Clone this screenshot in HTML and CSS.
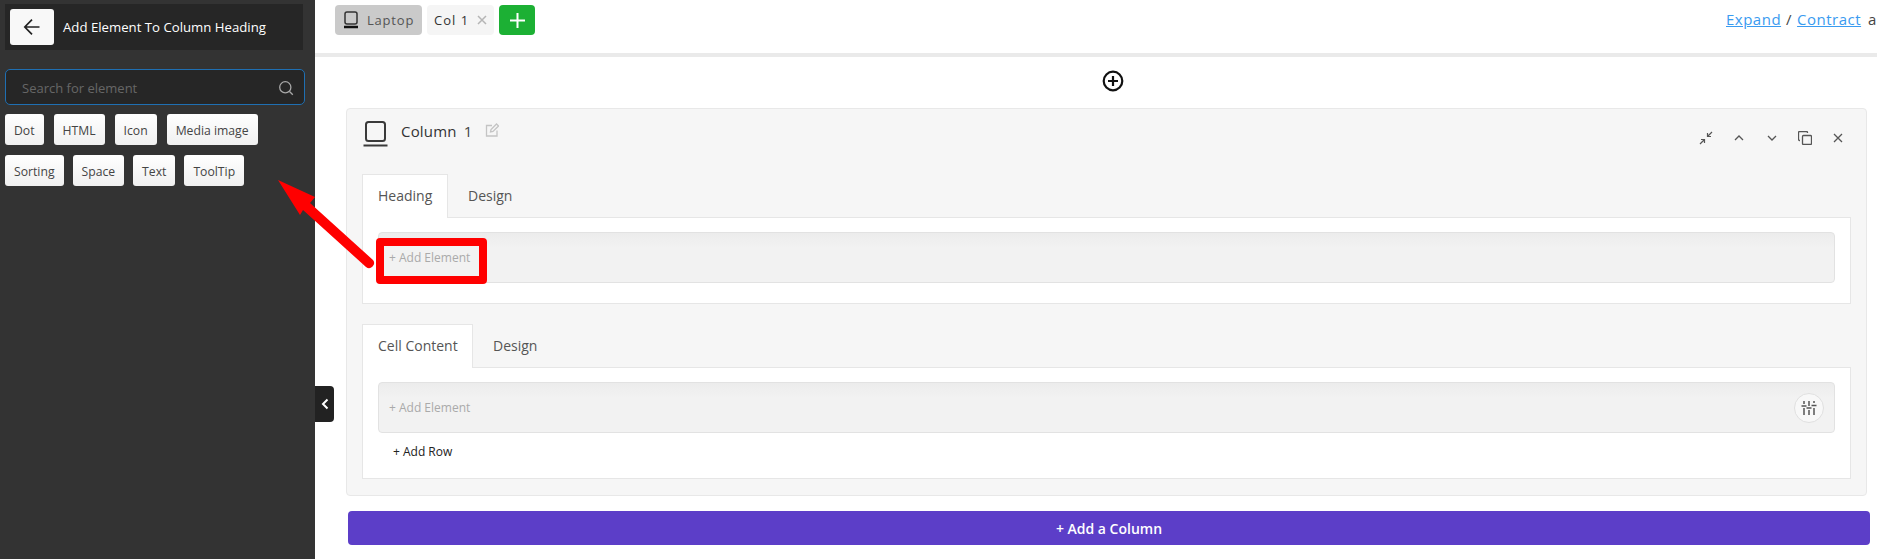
FILE: index.html
```html
<!DOCTYPE html>
<html lang="en">
<head>
<meta charset="utf-8">
<title>Column Editor</title>
<link rel="stylesheet" href="styles.css">
</head>
<body>
<div class="app">
  <aside class="sidebar">
    <div class="side-head">
      <button class="back" aria-label="Back">
        <svg width="18" height="18" viewBox="0 0 18 18" fill="none" stroke="#222" stroke-width="1.700"><path d="M16.500 9H1.800M9 1.600 1.800 9 9 16.400"/></svg>
      </button>
      <span class="side-title">Add Element To Column Heading</span>
    </div>
    <div class="search">
      <span class="search-text">Search for element</span>
      <svg width="16" height="16" viewBox="0 0 16 16" fill="none" stroke="#a8a8a8" stroke-width="1.300"><circle cx="7.300" cy="7.300" r="5.600"/><path d="m11.500 11.500 3.300 3.300"/></svg>
    </div>
    <div class="chips">
      <span class="chip">Dot</span>
      <span class="chip">HTML</span>
      <span class="chip">Icon</span>
      <span class="chip">Media image</span>
    </div>
    <div class="chips chips-second">
      <span class="chip">Sorting</span>
      <span class="chip">Space</span>
      <span class="chip">Text</span>
      <span class="chip">ToolTip</span>
    </div>
    <div class="toggle">
      <svg width="8" height="12" viewBox="0 0 8 12" fill="none" stroke="#fff" stroke-width="2"><path d="M6.500 1.500 2 6l4.500 4.500"/></svg>
    </div>
  </aside>

  <main class="main">
    <header class="topbar">
      <div class="tabs-top">
        <span class="device">
          <svg width="16" height="18" viewBox="0 0 16 18" fill="none" stroke="#333" stroke-width="1.500"><rect x="2" y="1" width="12" height="12" rx="2"/><path d="M1 16h14" stroke-width="2.500" stroke="#111"/></svg>
          Laptop
        </span>
        <span class="col-tab">Col 1 <svg class="col-x" width="10" height="10" viewBox="0 0 10 10" stroke="#b5b5b5" stroke-width="1.500"><path d="m1 1 8 8M9 1 1 9"/></svg></span>
        <span class="add-col">
          <svg width="15" height="15" viewBox="0 0 15 15" stroke="#fff" stroke-width="2"><path d="M7.500 0v15M0 7.500h15"/></svg>
        </span>
      </div>
      <div class="expand"><a href="#">Expand</a> / <a href="#">Contract</a> <span class="expand-all">all</span></div>
    </header>

    <div class="plus-row">
      <svg width="22" height="22" viewBox="0 0 22 22" fill="none" stroke="#111" stroke-width="2.200"><circle cx="11" cy="11" r="9.300"/><path d="M11 6v10M6 11h10"/></svg>
    </div>

    <section class="panel">
      <div class="panel-head">
        <svg class="panel-laptop" width="25" height="27" viewBox="0 0 25 27" fill="none" stroke="#3a3a3a" stroke-width="2"><rect x="3" y="2" width="19" height="19" rx="2.500"/><path d="M0.500 25.500h24"/></svg>
        <span class="panel-title">Column</span><span class="panel-num">1</span>
        <svg class="panel-edit" width="14" height="14" viewBox="0 0 14 14" fill="none" stroke="#c4c4c4" stroke-width="1.300"><path d="M7 2.500H1.500v10.500h10.500V7.500M5.500 9l.5-2.500L11.500 1l2 2L8 8.500z"/></svg>
        <div class="panel-actions">
          <svg width="14" height="14" viewBox="0 0 14 14" fill="none" stroke="#555" stroke-width="1.200"><path d="M13 1 8.500 5.500M8.500 2v3.500H12M1 13l4.500-4.500M2 8.500h3.500V12"/></svg>
          <svg width="14" height="14" viewBox="0 0 14 14" fill="none" stroke="#555" stroke-width="1.300"><path d="m3 9 4-4 4 4"/></svg>
          <svg width="14" height="14" viewBox="0 0 14 14" fill="none" stroke="#555" stroke-width="1.300"><path d="m3 5 4 4 4-4"/></svg>
          <svg width="14" height="14" viewBox="0 0 14 14" fill="none" stroke="#555" stroke-width="1.300"><rect x="4.500" y="4.500" width="9" height="9" rx="1"/><path d="M9.500 2V1.500a1 1 0 0 0-1-1h-7a1 1 0 0 0-1 1v7a1 1 0 0 0 1 1H2"/></svg>
          <svg width="14" height="14" viewBox="0 0 14 14" fill="none" stroke="#555" stroke-width="1.300"><path d="m3 3 8 8M11 3l-8 8"/></svg>
        </div>
      </div>

      <div class="tabs">
        <span class="tab tab-active tab-heading">Heading</span>
        <span class="tab">Design</span>
      </div>
      <div class="tab-body tab-body-heading">
        <div class="drop"><span class="drop-text">+ Add Element</span></div>
      </div>

      <div class="tabs tabs-second">
        <span class="tab tab-active tab-cell">Cell Content</span>
        <span class="tab">Design</span>
      </div>
      <div class="tab-body">
        <div class="drop">
          <span class="drop-text">+ Add Element</span>
          <span class="settings">
            <svg width="16" height="14" viewBox="0 0 16 14" fill="none" stroke="#555" stroke-width="1.500"><path d="M3 0v3M3 7v7M8 0v5M8 9v5M13 0v2M13 7v7" /><path d="M0.500 5h5M5.500 7h5M10.500 4.500h5" stroke-width="1.700"/></svg>
          </span>
        </div>
        <div class="add-row">+ Add Row</div>
      </div>
    </section>

    <button class="add-column">+ Add a Column</button>
  </main>

  <div class="mark-box"></div>
  <svg class="mark-arrow" width="110" height="100" viewBox="0 0 110 100"><path d="M13 10 50 27 45 33 108 90a5 5 0 0 1-7 7L38 40 35 45z" fill="#f00"/></svg>
</div>
</body>
</html>
```

FILE: styles.css
```css
* { box-sizing: border-box; }
html, body { margin: 0; height: 100%; overflow: hidden; background: #fff; }
body { font-family: "Open Sans", "Noto Sans", sans-serif; color: #333; }
.app { position: relative; display: flex; width: 1877px; height: 559px; overflow: hidden; }

.sidebar { position: relative; flex: 0 0 315px; background: #333; padding: 4px 10px 0 5px; }
.side-head { display: flex; align-items: center; width: 298px; height: 46px; padding-left: 5px; background: #262626; }
.back { display: flex; align-items: center; justify-content: center; width: 44px; height: 36px; padding: 0; border: 0; border-radius: 3px; background: #f8f8f8; }
.side-title { margin-left: 9px; font-size: 13.200px; font-weight: 500; color: #fff; white-space: nowrap; }
.search { display: flex; align-items: center; justify-content: space-between; width: 300px; height: 36px; margin-top: 19px; padding: 1px 10px 0 16px; background: #262626; border: 1px solid #1f6fb2; border-radius: 5px; }
.search-text { font-size: 13px; color: #666; }
.chips { display: flex; gap: 10px; margin-top: 9px; }
.chips-second { gap: 9px; margin-top: 10px; }
.chip { display: flex; align-items: center; height: 31px; padding: 1px 9px 0; border-radius: 3px; background: linear-gradient(#fff, #f0f0f0); font-size: 12.200px; color: #444; }
.toggle { position: absolute; left: 315px; top: 386px; z-index: 2; display: flex; align-items: center; justify-content: center; width: 19px; height: 36px; background: #222; border-radius: 0 4px 4px 0; }

.main { flex: 1; min-width: 0; }
.topbar { display: flex; justify-content: space-between; height: 57px; padding: 5px 0 0 20px; border-bottom: 4px solid #eaeaea; }
.tabs-top { display: flex; height: 30px; }
.device { display: flex; align-items: center; gap: 8px; width: 87px; padding-left: 8px; background: #cacaca; border-radius: 4px; font-size: 13px; letter-spacing: .8px; color: #555; }
.col-tab { display: flex; align-items: center; gap: 9px; width: 67px; margin-left: 5px; padding-left: 7px; background: #f5f5f5; border-radius: 4px; font-size: 13px; letter-spacing: 1px; color: #333; }
.col-x { margin-left: -1px; }
.add-col { display: flex; align-items: center; justify-content: center; width: 36px; margin-left: 5px; background: #1cb034; border-radius: 4px; }
.expand { width: 151px; flex: none; margin-top: 4px; font-size: 15px; letter-spacing: .5px; word-spacing: .6px; white-space: nowrap; color: #444; }
.expand a { color: #3a9bf0; }
.expand-all { margin-left: 2px; }

.plus-row { display: flex; justify-content: center; height: 51px; padding-top: 13px; padding-left: 34px; }
.panel { width: 1521px; height: 388px; margin-left: 31px; padding: 0 15px; background: #f6f6f6; border: 1px solid #e8e8e8; border-radius: 4px; }
.panel-head { display: flex; align-items: flex-start; height: 65px; padding-top: 11px; }
.panel-laptop { margin-left: 1px; }
.panel-title { margin-left: 13px; margin-top: 1px; font-size: 15px; letter-spacing: .2px; color: #333; }
.panel-num { margin-left: 7px; margin-top: 1px; font-size: 15px; color: #444; }
.panel-edit { margin-left: 13px; margin-top: 3px; }
.panel-actions { display: flex; gap: 19px; margin-left: auto; margin-top: 11px; margin-right: 6px; }
.tabs { display: flex; height: 43px; }
.tab { display: flex; align-items: center; padding: 0 20px; font-size: 14px; color: #555; white-space: nowrap; }
.tab-active { position: relative; z-index: 1; height: 44px; background: #fff; border: 1px solid #e6e6e6; border-bottom: 0; padding: 0 15px 2px; }
.tab-heading { width: 86px; }
.tab-cell { width: 111px; }
.tab-body { background: #fff; border: 1px solid #e6e6e6; padding: 14px 15px 0; height: 112px; }
.tab-body-heading { height: 87px; }
.tabs-second { margin-top: 20px; }
.drop { display: flex; align-items: center; justify-content: space-between; height: 51px; padding: 0 10px 0 10px; background: linear-gradient(#ececec, #f2f2f2 30%); border: 1px solid #e2e2e2; border-radius: 4px; }
.drop-text { font-size: 12px; color: #aaa; }
.settings { display: flex; align-items: center; justify-content: center; width: 30px; height: 30px; border-radius: 50%; background: #f8f8f8; border: 1px solid #e0e0e0; }
.add-row { margin: 10px 0 0 15px; font-size: 12px; color: #222; }
.add-column { display: block; width: 1522px; height: 34px; margin: 15px 0 0 33px; border: 0; border-radius: 4px; background: #5c3ec8; color: #fff; font: 600 14px "Open Sans", sans-serif; }

.mark-box { position: absolute; left: 376px; top: 238px; width: 111px; height: 46px; border: 8px solid #f00; border-radius: 4px; }
.mark-arrow { position: absolute; left: 265px; top: 170px; }
```
